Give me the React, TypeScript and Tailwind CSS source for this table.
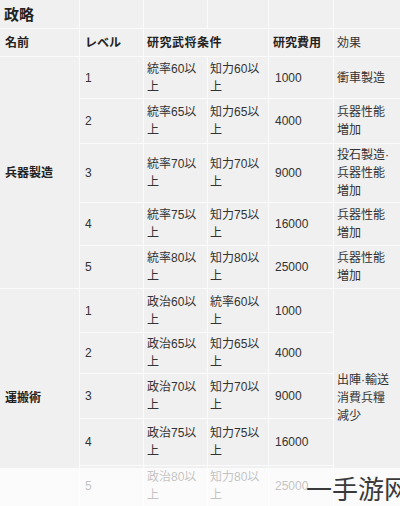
import React from "react";

type Row = {
  level: string;
  c1: string;
  c2: string;
  cost: string;
  effect?: string[];
};

const groupA: Row[] = [
  { level: "1", c1: "統率60以", c2: "知力60以", cost: "1000", effect: ["衝車製造"] },
  { level: "2", c1: "統率65以", c2: "知力65以", cost: "4000", effect: ["兵器性能", "増加"] },
  { level: "3", c1: "統率70以", c2: "知力70以", cost: "9000", effect: ["投石製造·", "兵器性能", "増加"] },
  { level: "4", c1: "統率75以", c2: "知力75以", cost: "16000", effect: ["兵器性能", "増加"] },
  { level: "5", c1: "統率80以", c2: "知力80以", cost: "25000", effect: ["兵器性能", "増加"] },
];

const groupB: Row[] = [
  { level: "1", c1: "政治60以", c2: "統率60以", cost: "1000" },
  { level: "2", c1: "政治65以", c2: "知力65以", cost: "4000" },
  { level: "3", c1: "政治70以", c2: "知力70以", cost: "9000" },
  { level: "4", c1: "政治75以", c2: "知力75以", cost: "16000" },
  { level: "5", c1: "政治80以", c2: "知力80以", cost: "25000" },
];

const cell = "bg-[#f0f0f0] flex flex-col justify-center leading-[18px]";

function Lines({ items }: { items: string[] }) {
  return (
    <>
      {items.map((t, i) => (
        <span key={i}>{t}</span>
      ))}
    </>
  );
}

function DataCells({ row }: { row: Row }) {
  return (
    <>
      <div className={`${cell} pl-[5px]`}>{row.level}</div>
      <div className={`${cell} pl-[3px]`}>
        <Lines items={[row.c1, "上"]} />
      </div>
      <div className={`${cell} pl-[2px]`}>
        <Lines items={[row.c2, "上"]} />
      </div>
      <div className={`${cell} pl-[6px]`}>{row.cost}</div>
      {row.effect && (
        <div className={`${cell} pl-[3px]`}>
          <Lines items={row.effect} />
        </div>
      )}
    </>
  );
}

export default function App() {
  return (
    <div
      className="relative w-[400px] h-[506px] overflow-hidden bg-white text-[12px] text-[#333]"
      style={{ fontFamily: '"Liberation Sans", "Noto Sans CJK JP", sans-serif' }}
    >
      <div className="grid grid-cols-[79px_63px_63px_60px_64px_66px] grid-rows-[28px_27px_41px_44px_58px_42px_42px_43px_40px_44px_46px_40px] gap-px bg-[#fbfbfb]">
        {/* title row */}
        <div className={`${cell} pl-[4px] pt-[2px] text-[15px] font-bold text-[#222]`}>政略</div>
        <div className={cell}></div>
        <div className={cell}></div>
        <div className={cell}></div>
        <div className={cell}></div>
        <div className={cell}></div>

        {/* header */}
        <div className={`${cell} pl-[5px] font-bold text-[#222]`}>名前</div>
        <div className={`${cell} pl-[5px] font-bold text-[#222]`}>レベル</div>
        <div className={`${cell} col-span-2 pl-[3px] font-bold text-[#222] tracking-[0.5px]`}>研究武将条件</div>
        <div className={`${cell} pl-[4px] font-bold text-[#222]`}>研究費用</div>
        <div className={`${cell} pl-[3px]`}>効果</div>

        {/* 兵器製造 */}
        <div className={`${cell} row-span-5 pl-[5px] font-bold text-[#222]`}>兵器製造</div>
        {groupA.map((r) => (
          <DataCells key={r.level} row={r} />
        ))}

        {/* 運搬術 */}
        <div className={`${cell} row-span-5 pl-[5px] font-bold text-[#222]`}>運搬術</div>
        <DataCells row={groupB[0]} />
        <div className={`${cell} row-span-5 pl-[3px]`}>
          <Lines items={["出陣·輸送", "消費兵糧", "減少"]} />
        </div>
        {groupB.slice(1).map((r) => (
          <DataCells key={r.level} row={r} />
        ))}
      </div>

      {/* faded bottom band */}
      <div className="absolute left-0 right-0 top-[468px] bottom-0 bg-white/70"></div>

      {/* watermark */}
      <div
        className="absolute left-[306px] top-[475px] whitespace-nowrap text-[26px] leading-none text-[#3a3a3a]"
        style={{ fontFamily: '"Noto Sans CJK SC", sans-serif' }}
      >
        一手游网
      </div>
    </div>
  );
}
